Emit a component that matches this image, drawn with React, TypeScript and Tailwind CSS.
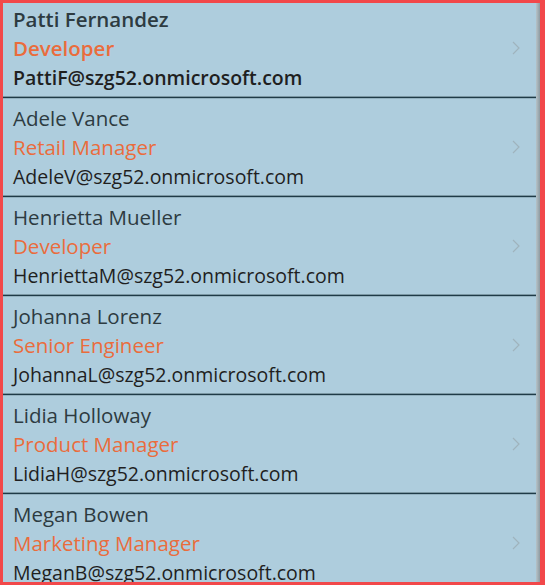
import React from "react";

const people = [
  { name: "Patti Fernandez", role: "Developer", email: "PattiF@szg52.onmicrosoft.com", selected: true },
  { name: "Adele Vance", role: "Retail Manager", email: "AdeleV@szg52.onmicrosoft.com" },
  { name: "Henrietta Mueller", role: "Developer", email: "HenriettaM@szg52.onmicrosoft.com" },
  { name: "Johanna Lorenz", role: "Senior Engineer", email: "JohannaL@szg52.onmicrosoft.com" },
  { name: "Lidia Holloway", role: "Product Manager", email: "LidiaH@szg52.onmicrosoft.com" },
  { name: "Megan Bowen", role: "Marketing Manager", email: "MeganB@szg52.onmicrosoft.com" },
];

function Chevron() {
  return (
    <svg width="8" height="14" viewBox="0 0 8 14" className="shrink-0">
      <path d="M1 1 L7 7 L1 13" fill="none" stroke="#9fb3bd" strokeWidth="1.2" />
    </svg>
  );
}

export default function App() {
  return (
    <div className="w-[545px] h-[585px] bg-[#f2484a] pt-[3px] pl-[3px] pr-[5px] pb-[3px] overflow-hidden">
      <div className="flex h-full w-full bg-[#aecddd] overflow-hidden">
        <div className="flex-1 flex flex-col overflow-hidden" style={{ fontFamily: '"Open Sans", "Noto Sans", sans-serif' }}>
          <div className="flex flex-col -mt-[3px]">
            {people.map((p, i) => (
              <div key={i} className="flex flex-col shrink-0">
                <div className={`h-[96px] flex items-center pl-[10px] pr-[16px] ${p.selected ? "font-semibold" : "font-normal"}`}>
                  <div className="flex-1 flex flex-col pt-[5px] self-start leading-[29px]">
                    <div className="text-[#2d3b41] text-[20.5px] whitespace-nowrap">{p.name}</div>
                    <div className="text-[#ea6c3c] text-[20.5px] whitespace-nowrap">{p.role}</div>
                    <div className="text-[#1f1f1f] text-[19.5px] whitespace-nowrap">{p.email}</div>
                  </div>
                  <Chevron />
                </div>
                <div className="h-[3px] flex flex-col">
                  <div className="h-px bg-[#7b97a3]" />
                  <div className="h-px bg-[#1f3b47]" />
                  <div className="h-px bg-[#93b1bf]" />
                </div>
              </div>
            ))}
          </div>
        </div>
        <div className="w-[4px] bg-gradient-to-r from-[#b7c3c8] to-[#8d9ba1]" />
      </div>
    </div>
  );
}
